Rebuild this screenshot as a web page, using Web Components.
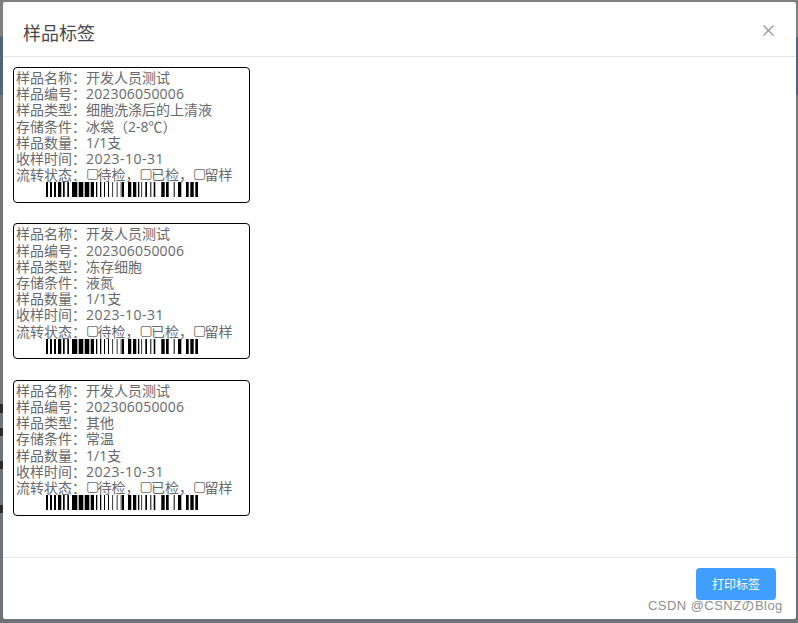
<!DOCTYPE html>
<html lang="zh">
<head>
<meta charset="utf-8">
<title>样品标签</title>
<style>
    html, body { margin: 0; height: 100%; }
    body { font-family: "Open Sans", "Noto Sans CJK SC", sans-serif; overflow: hidden; }
</style>
</head>
<body>
<label-dialog>
    <span slot="title">样品标签</span>
    <sample-label type="细胞洗涤后的上清液" storage="冰袋（2-8℃）"></sample-label>
    <sample-label type="冻存细胞" storage="液氮"></sample-label>
    <sample-label type="其他" storage="常温"></sample-label>
    <print-button slot="footer">打印标签</print-button>
</label-dialog>
<script>
class LabelDialog extends HTMLElement {
    constructor() {
        super();
        this.attachShadow({ mode: 'open' });
    }

    connectedCallback() {
        this.shadowRoot.innerHTML = `
            <style>
                :host {
                    display: block;
                    box-sizing: border-box;
                    position: relative;
                    width: 798px;
                    height: 623px;
                    padding: 2px 2px 4px 3px;
                    background:
                        linear-gradient(#2b2b2b, #2b2b2b) 0 404px / 3px 9px no-repeat,
                        linear-gradient(#2b2b2b, #2b2b2b) 0 428px / 3px 8px no-repeat,
                        linear-gradient(#2b2b2b, #2b2b2b) 0 461px / 3px 8px no-repeat,
                        linear-gradient(#2b2b2b, #2b2b2b) 0 505px / 3px 8px no-repeat,
                        linear-gradient(#7f7f7f 0 37px, #4f6679 37px 95px, #767676 95px 400px, #6d7378 400px);
                }
                .dialog {
                    height: 100%;
                    display: flex;
                    flex-direction: column;
                    background: #fff;
                    border-radius: 2px;
                    color: #66686d;
                }
                header {
                    height: 54px;
                    flex: none;
                    display: flex;
                    justify-content: space-between;
                    align-items: center;
                    padding: 0 22px 0 20px;
                    border-bottom: 1px solid #e4e7ed;
                    font-size: 18px;
                    color: #46484d;
                }
                header ::slotted(span) { margin-top: 6px; }
                header svg { display: block; margin-top: 2px; }
                main {
                    flex: 1;
                    display: flex;
                    flex-direction: column;
                    gap: 20.4px;
                    padding: 10px 10px 0;
                }
                footer {
                    height: 62px;
                    flex: none;
                    box-sizing: border-box;
                    display: flex;
                    justify-content: flex-end;
                    padding: 10px 20px 0 0;
                    border-top: 1px solid #e4e7ed;
                }
                .watermark {
                    position: absolute;
                    left: 648px;
                    top: 597px;
                    font: 13px/18px "Liberation Sans", "Noto Sans CJK JP", sans-serif;
                    letter-spacing: .45px;
                    color: #8e8e8e;
                    white-space: nowrap;
                }
            </style>
            <div class="dialog">
                <header>
                    <slot name="title"></slot>
                    <svg width="11" height="11" viewBox="0 0 11 11" fill="none" stroke="#909399" stroke-width="1.2"><path d="M.5.5l10 10M10.5.5l-10 10"/></svg>
                </header>
                <main><slot></slot></main>
                <footer><slot name="footer"></slot></footer>
            </div>
            <div class="watermark">CSDN @CSNZのBlog</div>
        `;
    }
}

class SampleLabel extends HTMLElement {
    constructor() {
        super();
        this.attachShadow({ mode: 'open' });
    }

    connectedCallback() {
        const box = '<span class="box">▢</span>';
        const rows = [
            ['样品名称', '开发人员测试'],
            ['样品编号', '<span style="letter-spacing:.17px">202306050006</span>'],
            ['样品类型', this.getAttribute('type')],
            ['存储条件', this.getAttribute('storage')],
            ['样品数量', '1/1支'],
            ['收样时间', '<span style="letter-spacing:.5px">2023-10-31</span>'],
            ['流转状态', `${box}待检，${box}已检，${box}留样`]
        ];
        this.shadowRoot.innerHTML = `
            <style>
                :host {
                    display: block;
                    box-sizing: border-box;
                    width: 237px;
                    height: 136px;
                    padding: 2px 2px 0;
                    border: 1px solid #000;
                    border-radius: 4px;
                    font-size: 14px;
                    line-height: 16.2px;
                    white-space: nowrap;
                }
                .box {
                    display: inline-block;
                    width: 11.5px;
                    height: 14px;
                    font: 14px/13px "DejaVu Sans", sans-serif;
                    vertical-align: top;
                }
                bar-code { margin: -1px 0 0 30px; }
            </style>
            ${rows.map(r => `<div>${r[0]}：${r[1]}</div>`).join('')}
            <bar-code></bar-code>
        `;
    }
}

class BarCode extends HTMLElement {
    constructor() {
        super();
        this.attachShadow({ mode: 'open' });
    }

    connectedCallback() {
        // [x, width] of each bar, read off the reference (x from the first bar)
        const bars = [
            [0,2],[4,2],[8,2],[12,3.3],[17,1.7],[21.3,1.7],[26,5.3],[32.7,4.6],[38.7,4.6],[44.7,3.3],
            [50,1.3],[54,1.3],[58,1],[62,1],[66.3,.8],[70.7,.8],[74.7,.8],[76,2],[82,3.3],[87,3.3],
            [92,1.3],[95.3,.8],[99.3,1.7],[104.3,1],[107.7,1.6],[115.3,3.4],[120,2.7],[127.7,1],[132,3.3],
            [140,2.7],[144.3,3.4],[149.3,2.7]
        ];
        const rects = bars.map(b => `<rect x="${b[0]}" width="${b[1]}" height="15"/>`).join('');
        this.shadowRoot.innerHTML = `
            <style>
                :host { display: block; height: 15px; }
                svg { display: block; }
            </style>
            <svg width="152" height="15">${rects}</svg>
        `;
    }
}

class PrintButton extends HTMLElement {
    constructor() {
        super();
        this.attachShadow({ mode: 'open' });
    }

    connectedCallback() {
        this.shadowRoot.innerHTML = `
            <style>
                :host {
                    display: flex;
                    align-items: center;
                    justify-content: center;
                    box-sizing: border-box;
                    width: 80px;
                    height: 32px;
                    padding-bottom: 1px;
                    background: #409eff;
                    border-radius: 4px;
                    color: #fff;
                    font-size: 12px;
                    cursor: pointer;
                }
            </style>
            <slot></slot>
        `;
    }
}

customElements.define('label-dialog', LabelDialog);
customElements.define('sample-label', SampleLabel);
customElements.define('bar-code', BarCode);
customElements.define('print-button', PrintButton);
</script>
</body>
</html>
